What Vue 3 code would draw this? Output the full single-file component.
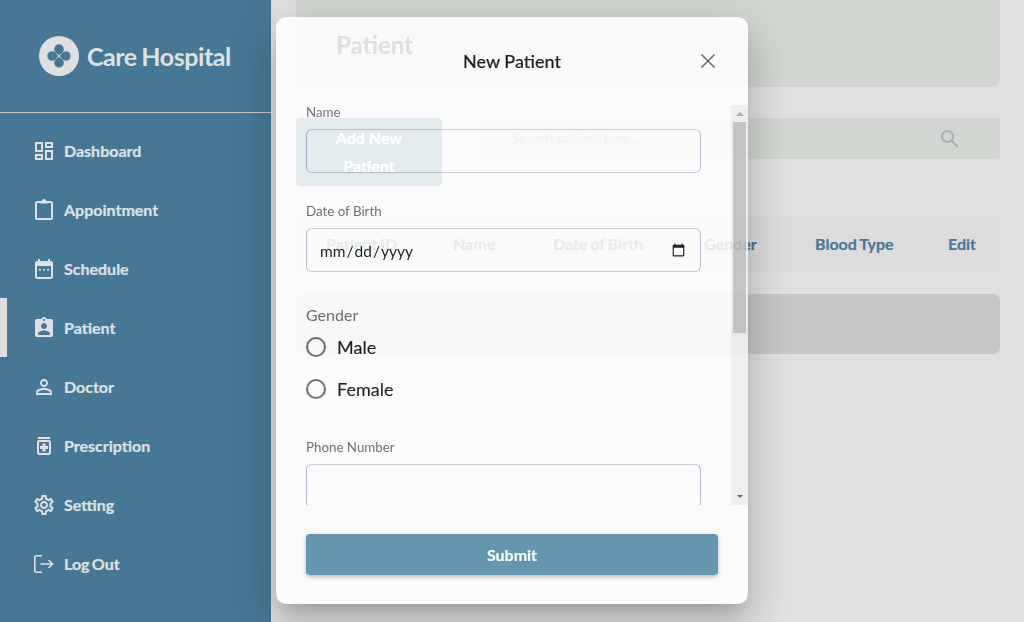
<template>
  <div class="page">
    <aside class="sidebar">
      <div class="brand">
        <svg class="brand-logo" viewBox="0 0 40 40">
          <circle cx="20" cy="20" r="20" fill="#e0e0e0" />
          <g fill="#467896">
            <path v-for="deg in [0, 90, 180, 270]" :key="deg" d="M20 19.3L16.6 16.5A4.8 4.8 0 1 1 23.4 16.5Z" :transform="`rotate(${deg} 20 20)`" />
          </g>
        </svg>
        <span>Care Hospital</span>
      </div>
      <nav class="nav">
        <a v-for="item in navItems" :key="item.label" class="nav-item" :class="{ active: item.label === 'Patient' }">
          <svg class="nav-icon" viewBox="0 0 24 24" v-html="item.icon"></svg>
          <span>{{ item.label }}</span>
        </a>
      </nav>
    </aside>

    <main class="content">
      <div class="title-card"><h1>Patient</h1></div>
      <div class="toolbar">
        <button class="add-btn">Add New Patient</button>
        <div class="search">
          <span>Search patient here...</span>
          <svg viewBox="0 0 24 24" width="24" height="24">
            <path fill="#a5aebd" d="M15.5 14h-.79l-.28-.27C15.41 12.59 16 11.11 16 9.5 16 5.91 13.09 3 9.5 3S3 5.91 3 9.5 5.91 16 9.5 16c1.61 0 3.09-.59 4.23-1.57l.27.28v.79l5 4.99L20.49 19l-4.99-5zm-6 0C7.01 14 5 11.99 5 9.5S7.01 5 9.5 5 14 7.01 14 9.5 11.99 14 9.5 14z" />
          </svg>
        </div>
      </div>
      <div class="table-head">
        <span v-for="col in columns" :key="col">{{ col }}</span>
      </div>
      <div class="table-row"></div>
    </main>

    <div class="modal">
      <header class="modal-head">
        <h2>New Patient</h2>
        <button class="close" aria-label="Close">
          <svg viewBox="0 0 16 16" width="16" height="16">
            <path d="M1.5 1.5l13 13M14.5 1.5l-13 13" stroke="#555" stroke-width="1.5" fill="none" />
          </svg>
        </button>
      </header>
      <div class="modal-scroll">
        <form class="modal-body">
          <label class="field">
            <span>Name</span>
            <input type="text" />
          </label>
          <label class="field">
            <span>Date of Birth</span>
            <input class="date" type="date" />
          </label>
          <div class="gender">
            <div class="gender-title">Gender</div>
            <label class="radio"><input type="radio" name="gender" /> Male</label>
            <label class="radio"><input type="radio" name="gender" /> Female</label>
          </div>
          <label class="field">
            <span>Phone Number</span>
            <input type="text" />
          </label>
        </form>
        <div class="scrollbar">
          <div class="sb-btn"><i class="arrow-up"></i></div>
          <div class="sb-track"><div class="sb-thumb"></div></div>
          <div class="sb-btn"><i class="arrow-down"></i></div>
        </div>
      </div>
      <div class="modal-foot">
        <button class="submit">Submit</button>
      </div>
    </div>
  </div>
</template>

<script setup>
const navItems = [
  {
    label: 'Dashboard',
    icon: '<path fill="#e0e0e0" d="M19 5v2h-4V5h4M9 5v6H5V5h4m10 8v6h-4v-6h4M9 17v2H5v-2h4M21 3h-8v6h8V3zM11 3H3v10h8V3zm10 8h-8v10h8V11zm-10 4H3v6h8v-6z"/>'
  },
  {
    label: 'Appointment',
    icon: '<rect x="4" y="4" width="16" height="17" rx="1" fill="none" stroke="#e0e0e0" stroke-width="2"/><path fill="#e0e0e0" d="M8.5 3h1.2c.3-1.2 1.1-2 2.3-2s2 .8 2.3 2h1.2v2.5h-7z"/>'
  },
  {
    label: 'Schedule',
    icon: '<path fill="#e0e0e0" d="M19 4h-1V2h-2v2H8V2H6v2H5c-1.1 0-2 .9-2 2v14c0 1.1.9 2 2 2h14c1.1 0 2-.9 2-2V6c0-1.1-.9-2-2-2zm0 16H5V9h14v11zM7 12h2v1.5H7zm4 0h2v1.5h-2zm4 0h2v1.5h-2z"/>'
  },
  {
    label: 'Patient',
    icon: '<path fill="#e0e0e0" d="M19 3h-4.18C14.4 1.84 13.3 1 12 1c-1.3 0-2.4.84-2.82 2H5c-1.1 0-2 .9-2 2v14c0 1.1.9 2 2 2h14c1.1 0 2-.9 2-2V5c0-1.1-.9-2-2-2zm-7 0c.55 0 1 .45 1 1s-.45 1-1 1-1-.45-1-1 .45-1 1-1zm0 4c1.66 0 3 1.34 3 3s-1.34 3-3 3-3-1.34-3-3 1.34-3 3-3zm6 12H6v-1.4c0-2 4-3.1 6-3.1s6 1.1 6 3.1V19z"/>'
  },
  {
    label: 'Doctor',
    icon: '<path fill="#e0e0e0" d="M12 5.9c1.16 0 2.1.94 2.1 2.1s-.94 2.1-2.1 2.1S9.9 9.16 9.9 8s.94-2.1 2.1-2.1m0 9c2.97 0 6.1 1.46 6.1 2.1v1.1H5.9V17c0-.64 3.13-2.1 6.1-2.1M12 4C9.79 4 8 5.79 8 8s1.79 4 4 4 4-1.79 4-4-1.79-4-4-4zm0 9c-2.67 0-8 1.34-8 4v3h16v-3c0-2.66-5.33-4-8-4z"/>'
  },
  {
    label: 'Prescription',
    icon: '<path fill="#e0e0e0" d="M6 3h12v2H6zm11 3H7c-1.1 0-2 .9-2 2v11c0 1.1.9 2 2 2h10c1.1 0 2-.9 2-2V8c0-1.1-.9-2-2-2zm0 13H7V8h10v11zm-6.5-1.5h3V15H16v-3h-2.5V9.5h-3V12H8v3h2.5z"/>'
  },
  {
    label: 'Setting',
    icon: '<path fill="#e0e0e0" d="M19.43 12.98c.04-.32.07-.64.07-.98 0-.34-.03-.66-.07-.98l2.11-1.65c.19-.15.24-.42.12-.64l-2-3.46c-.09-.16-.26-.25-.44-.25-.06 0-.12.01-.17.03l-2.49 1c-.52-.4-1.08-.73-1.69-.98l-.38-2.65C14.46 2.18 14.25 2 14 2h-4c-.25 0-.46.18-.49.42l-.38 2.65c-.61.25-1.17.59-1.69.98l-2.49-1c-.06-.02-.12-.03-.18-.03-.17 0-.34.09-.43.25l-2 3.46c-.13.22-.07.49.12.64l2.11 1.65c-.04.32-.07.65-.07.98 0 .33.03.66.07.98l-2.11 1.65c-.19.15-.24.42-.12.64l2 3.46c.09.16.26.25.44.25.06 0 .12-.01.17-.03l2.49-1c.52.4 1.08.73 1.69.98l.38 2.65c.03.24.24.42.49.42h4c.25 0 .46-.18.49-.42l.38-2.65c.61-.25 1.17-.59 1.69-.98l2.49 1c.06.02.12.03.18.03.17 0 .34-.09.43-.25l2-3.46c.12-.22.07-.49-.12-.64l-2.11-1.65zm-1.98-1.71c.04.31.05.52.05.73 0 .21-.02.43-.05.73l-.14 1.13.89.7 1.08.84-.7 1.21-1.27-.51-1.04-.42-.9.68c-.43.32-.84.56-1.25.73l-1.06.43-.16 1.13-.2 1.35h-1.4l-.19-1.35-.16-1.13-1.06-.43c-.43-.18-.83-.41-1.23-.71l-.91-.7-1.06.43-1.27.51-.7-1.21 1.08-.84.89-.7-.14-1.13c-.03-.31-.05-.54-.05-.74s.02-.43.05-.73l.14-1.13-.89-.7-1.08-.84.7-1.21 1.27.51 1.04.42.9-.68c.43-.32.84-.56 1.25-.73l1.06-.43.16-1.13.2-1.35h1.39l.19 1.35.16 1.13 1.06.43c.43.18.83.41 1.23.71l.91.7 1.06-.43 1.27-.51.7 1.21-1.07.85-.89.7.14 1.13zM12 8c-2.21 0-4 1.79-4 4s1.79 4 4 4 4-1.79 4-4-1.79-4-4-4zm0 6c-1.1 0-2-.9-2-2s.9-2 2-2 2 .9 2 2-.9 2-2 2z"/>'
  },
  {
    label: 'Log Out',
    icon: '<path fill="none" stroke="#e0e0e0" stroke-width="1.6" d="M10 3.8H4.3A1.5 1.5 0 0 0 2.8 5.3v13.4a1.5 1.5 0 0 0 1.5 1.5H10M8.5 12H20.5M16.5 8l4 4-4 4"/>'
  }
]

const columns = ['Patient ID', 'Name', 'Date of Birth', 'Gender', 'Blood Type', 'Edit']
</script>

<style>
html,
body {
  margin: 0;
  background: #e0e0e0;
}
</style>

<style scoped>
.page {
  display: flex;
  width: 1024px;
  height: 622px;
  overflow: hidden;
  font-family: Lato, "Noto Sans", sans-serif;
  background: #e0e0e0;
}

.sidebar {
  width: 271px;
  flex: none;
  background: #467896;
  color: #e0e0e0;
}

.brand {
  display: flex;
  align-items: center;
  gap: 8px;
  height: 112px;
  padding-left: 39px;
  border-bottom: 1px solid #c8c8c4;
  font-size: 25px;
  font-weight: 700;
  letter-spacing: -0.45px;
  word-spacing: -1px;
}

.brand-logo {
  width: 40px;
  height: 40px;
}

.nav {
  padding-top: 8px;
}

.nav-item {
  display: flex;
  align-items: center;
  gap: 8px;
  height: 59px;
  padding-left: 32px;
  font-size: 16px;
  font-weight: 700;
  word-spacing: -1.5px;
  -webkit-text-stroke: 0.2px #e0e0e0;
  box-sizing: border-box;
}

.nav-item.active {
  border-left: 7px solid #e0e0e0;
  padding-left: 25px;
}

.nav-icon {
  width: 24px;
  height: 24px;
}

.content {
  flex: 1;
  padding: 0 24px 0 25px;
  color: #467896;
}

.title-card {
  height: 87px;
  background: #d2d6d0;
  border-radius: 0 0 8px 8px;
  padding-left: 40px;
}

.title-card h1 {
  margin: 0;
  padding-top: 29px;
  font-size: 24px;
  line-height: 32px;
  font-weight: 700;
  color: #222;
}

.toolbar {
  display: flex;
  justify-content: space-between;
  align-items: flex-start;
  margin-top: 31px;
}

.add-btn {
  width: 146px;
  height: 68px;
  padding: 0 20px;
  border: 0;
  border-radius: 4px;
  background: #467896;
  color: #fff;
  font: 700 16px/28px Lato, sans-serif;
  -webkit-text-stroke: 0.2px #fff;
}

.search {
  display: flex;
  align-items: center;
  justify-content: space-between;
  width: 520px;
  height: 41px;
  padding: 0 38px 0 32px;
  box-sizing: border-box;
  background: #d2d6d0;
  border-radius: 4px;
  color: #9aa0a6;
  font-size: 14px;
  line-height: 39px;
}

.search span {
  margin-top: -2px;
}

.table-head {
  display: grid;
  grid-template-columns: 127px 100px 151px 111px 133px auto;
  align-items: center;
  height: 56px;
  margin-top: 30px;
  padding: 0 0 2px 30px;
  box-sizing: border-box;
  background: #dcdcdc;
  font-size: 16px;
  font-weight: 700;
  word-spacing: -1px;
  -webkit-text-stroke: 0.2px #467896;
}

.table-row {
  height: 60px;
  margin-top: 22px;
  background: #c6c6c6;
  border-radius: 6px;
}

.modal {
  position: fixed;
  left: 276px;
  top: 17px;
  width: 472px;
  height: 587px;
  display: flex;
  flex-direction: column;
  background: #fff;
  border-radius: 10px;
  opacity: 0.85;
  box-shadow: 0 11px 15px -7px rgba(0, 0, 0, 0.2), 0 24px 38px 3px rgba(0, 0, 0, 0.14), 0 9px 46px 8px rgba(0, 0, 0, 0.12);
}

.modal-head {
  position: relative;
  display: flex;
  align-items: center;
  justify-content: center;
  height: 88px;
  flex: none;
}

.modal-head h2 {
  margin: 0;
  font-size: 18px;
  font-weight: 500;
  color: #000;
  -webkit-text-stroke: 0.15px #000;
}

.close {
  position: absolute;
  right: 32px;
  top: 36px;
  padding: 0;
  border: 0;
  background: none;
  line-height: 0;
}

.modal-scroll {
  display: flex;
  height: 400px;
  flex: none;
}

.modal-body {
  flex: 1;
  min-width: 0;
  overflow: hidden;
  padding: 0 30px;
}

.scrollbar {
  display: flex;
  flex-direction: column;
  width: 17px;
  flex: none;
  background: #f1f1f1;
}

.sb-btn {
  display: flex;
  align-items: center;
  justify-content: center;
  height: 17px;
  flex: none;
}

.arrow-up {
  border: solid transparent;
  border-width: 0 4px 4px;
  border-bottom-color: #a3a3a3;
}

.arrow-down {
  border: solid transparent;
  border-width: 3px 3px 0;
  border-top-color: #505050;
}

.sb-track {
  flex: 1;
}

.sb-thumb {
  height: 211px;
  margin: 0 2px;
  background: #c1c1c1;
}

.field {
  display: block;
  margin-bottom: 31px;
}

.field span {
  display: block;
  margin-top: -1px;
  font-size: 13.33px;
  line-height: 16px;
  margin-bottom: 9px;
  color: #5d5d5d;
}

.field input {
  display: block;
  width: 100%;
  height: 44px;
  box-sizing: border-box;
  padding: 0 12px;
  border: 1px solid;
  border-color: #c0cbd8 #a9b8cc;
  border-radius: 6px;
  background: transparent;
  font: 15.5px Lato, sans-serif;
  color: #000;
}

.field input.date {
  padding-top: 2px;
}

.gender {
  margin-bottom: 30px;
}

.gender-title {
  font-size: 16px;
  line-height: 24px;
  color: #5d5d5d;
}

.radio {
  display: flex;
  align-items: center;
  gap: 11px;
  height: 42px;
  margin-top: -1px;
  margin-bottom: 1px;
  font-size: 18px;
  color: #000;
  -webkit-text-stroke: 0.15px #000;
}

.radio input {
  appearance: none;
  width: 20px;
  height: 20px;
  margin: 0;
  border: 2px solid #5a5a5a;
  border-radius: 50%;
  box-sizing: border-box;
}

.modal-foot {
  padding: 29px 30px 0;
}

.submit {
  display: block;
  width: 100%;
  height: 41px;
  border: 0;
  border-radius: 4px;
  background: #4e89a7;
  color: #fff;
  font: 700 16px Lato, sans-serif;
  -webkit-text-stroke: 0.2px #fff;
  box-shadow: 0 2px 4px rgba(0, 0, 0, 0.3);
}
</style>
